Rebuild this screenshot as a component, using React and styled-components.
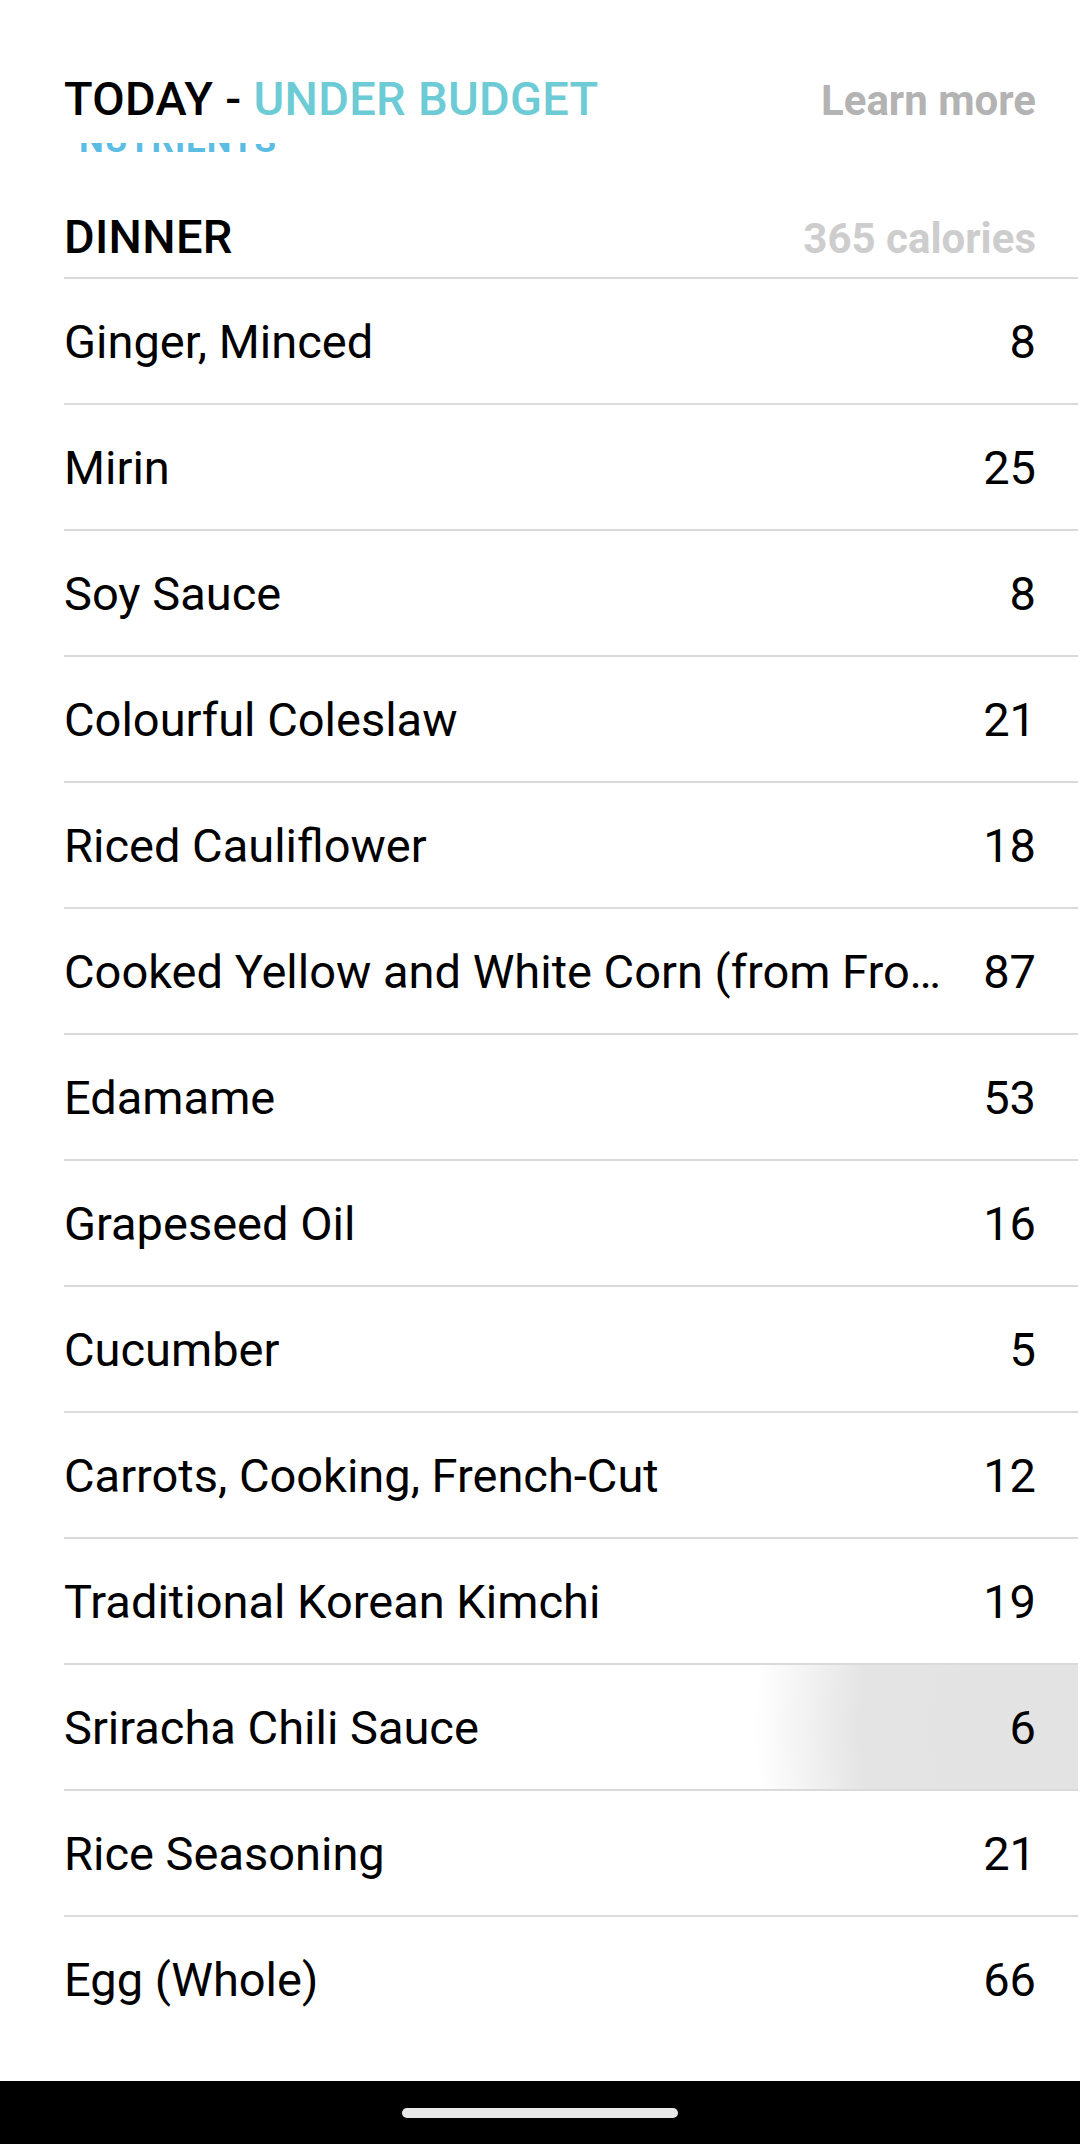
import styled, { createGlobalStyle } from "styled-components";

const GlobalStyle = createGlobalStyle`
  html, body {
    margin: 0;
    padding: 0;
    background: #fff;
  }
  body {
    font-family: Roboto, "Noto Sans", "Liberation Sans", sans-serif;
  }
`;

const Screen = styled.div`
  width: 1080px;
  height: 2144px;
  display: flex;
  flex-direction: column;
  background: #fff;
  overflow: hidden;
`;

const TopBar = styled.div`
  height: 140px;
  box-sizing: border-box;
  padding: 71px 44px 0 64px;
  display: flex;
  align-items: baseline;
  justify-content: space-between;
`;

const Heading = styled.div`
  font-size: 47px;
  font-weight: 500;
  color: #000;
  letter-spacing: 0.3px;
`;

const Accent = styled.span`
  color: #6ccbd4;
`;

const SideLabel = styled.div`
  font-size: 42px;
  font-weight: 700;
  color: ${(p) => p.$tone};
`;

const Content = styled.div`
  flex: 1;
  display: flex;
  flex-direction: column;
`;

/* tab strip scrolled up under the sticky bar, only its bottom edge shows */
const ClippedTab = styled.div`
  height: 9px;
  margin-top: 3px;
  overflow: hidden;
  display: flex;
  align-items: flex-end;
  padding-left: 79px;
`;

const ClippedText = styled.span`
  font-size: 35px;
  line-height: 1;
  font-weight: 700;
  letter-spacing: 1px;
  color: #5bbde4;
  margin-bottom: -6px;
`;

const SectionHeader = styled.div`
  box-sizing: border-box;
  height: 125px;
  padding: 57px 44px 0 64px;
  display: flex;
  align-items: baseline;
  justify-content: space-between;
`;

const List = styled.div`
  margin: 0 2px 0 64px;
`;

const Row = styled.div`
  height: 124px;
  border-top: 2px solid #dadada;
  display: flex;
  align-items: center;
  gap: 36px;
  padding-right: 42px;
  background: ${(p) =>
    p.$pressed
      ? "radial-gradient(circle at 1040px 50%, #e3e3e3 0, #e4e4e4 245px, rgba(228,228,228,0) 350px)"
      : "transparent"};
`;

const FoodName = styled.div`
  flex: 1;
  min-width: 0;
  font-size: 47px;
  color: #000;
  white-space: nowrap;
  overflow: hidden;
  text-overflow: ellipsis;
`;

const Calories = styled.div`
  font-size: 47px;
  color: #000;
  text-align: right;
`;

const NavBar = styled.div`
  height: 63px;
  background: #000;
  display: flex;
  justify-content: center;
  padding-top: 27px;
  box-sizing: border-box;
`;

const HomePill = styled.div`
  width: 276px;
  height: 10px;
  border-radius: 5px;
  background: #e8e8e8;
`;

const foods = [
  { name: "Ginger, Minced", cal: 8 },
  { name: "Mirin", cal: 25 },
  { name: "Soy Sauce", cal: 8 },
  { name: "Colourful Coleslaw", cal: 21 },
  { name: "Riced Cauliflower", cal: 18 },
  { name: "Cooked Yellow and White Corn (from Frozen)", cal: 87 },
  { name: "Edamame", cal: 53 },
  { name: "Grapeseed Oil", cal: 16 },
  { name: "Cucumber", cal: 5 },
  { name: "Carrots, Cooking, French-Cut", cal: 12 },
  { name: "Traditional Korean Kimchi", cal: 19 },
  { name: "Sriracha Chili Sauce", cal: 6, pressed: true },
  { name: "Rice Seasoning", cal: 21 },
  { name: "Egg (Whole)", cal: 66 },
];

const App = () => {
  return (
    <>
      <GlobalStyle />
      <Screen>
        <TopBar>
          <Heading>
            TODAY - <Accent>UNDER BUDGET</Accent>
          </Heading>
          <SideLabel $tone="#b3b3b3">Learn more</SideLabel>
        </TopBar>
        <Content>
          <ClippedTab>
            <ClippedText>NUTRIENTS</ClippedText>
          </ClippedTab>
          <SectionHeader>
            <Heading>DINNER</Heading>
            <SideLabel $tone="#cdcdcd">365 calories</SideLabel>
          </SectionHeader>
          <List>
            {foods.map((food) => (
              <Row key={food.name} $pressed={food.pressed}>
                <FoodName>{food.name}</FoodName>
                <Calories>{food.cal}</Calories>
              </Row>
            ))}
          </List>
        </Content>
        <NavBar>
          <HomePill />
        </NavBar>
      </Screen>
    </>
  );
};

export default App;
